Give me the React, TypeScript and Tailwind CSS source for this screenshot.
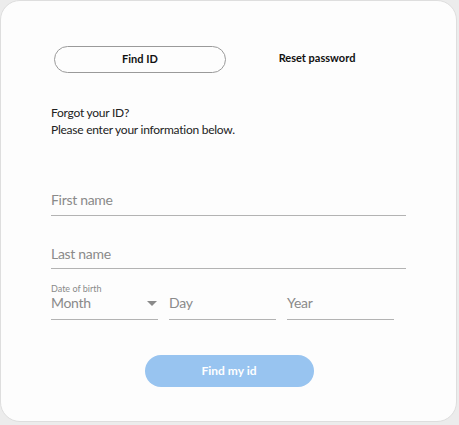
import React from "react";

export default function App() {
  return (
    <div className="w-[459px] h-[425px] bg-[#ececec] overflow-hidden" style={{ fontFamily: "Lato, Roboto, sans-serif" }}>
      <div className="w-[457px] h-[422px] bg-[#fdfdfd] border border-[#dedede] rounded-[20px] flex flex-col">
        <div className="flex items-center mt-[45px] ml-[53px]">
          <div className="w-[172px] h-[27px] rounded-full border border-[#9a9a9a] flex items-center justify-center text-[11px] font-bold text-[#111]">
            Find ID
          </div>
          <div className="w-[182px] text-center text-[11px] font-bold text-[#111] -mt-[2px]">Reset password</div>
        </div>
        <div className="mt-[31px] ml-[50px] text-[12px] leading-[17px] text-[#222] tracking-[-0.25px]">
          <div>Forgot your ID?</div>
          <div>Please enter your information below.</div>
        </div>
        <div className="ml-[50px] w-[355px] mt-[52px] tracking-[-0.3px]">
          <div className="h-[26px] border-b border-[#b3b3b3] text-[14px] text-[#8a8a8a] leading-[20px]">First name</div>
          <div className="h-[25px] border-b border-[#b3b3b3] text-[14px] text-[#8a8a8a] leading-[20px] mt-[28px]">Last name</div>
          <div className="text-[9px] text-[#8a8a8a] leading-[11px] mt-[14px] tracking-normal">Date of birth</div>
          <div className="flex gap-[11px] mt-[1px]">
            <div className="w-[107px] h-[25px] border-b border-[#b3b3b3] flex justify-between items-start text-[14px] leading-[16px] text-[#8a8a8a]">
              <span>Month</span>
              <svg width="10" height="6" viewBox="0 0 10 6" className="mt-[6px] mr-[1px]"><path d="M0 0h10L5 5z" fill="#8a8a8a" /></svg>
            </div>
            <div className="w-[107px] h-[25px] border-b border-[#b3b3b3] text-[14px] leading-[16px] text-[#8a8a8a]">Day</div>
            <div className="w-[107px] h-[25px] border-b border-[#b3b3b3] text-[14px] leading-[16px] text-[#8a8a8a]">Year</div>
          </div>
        </div>
        <div className="flex justify-center mt-[35px] ml-[1px]">
          <div className="w-[169px] h-[32px] rounded-full bg-[#98c4f0] flex items-center justify-center text-white text-[12px] font-bold">
            Find my id
          </div>
        </div>
      </div>
    </div>
  );
}
